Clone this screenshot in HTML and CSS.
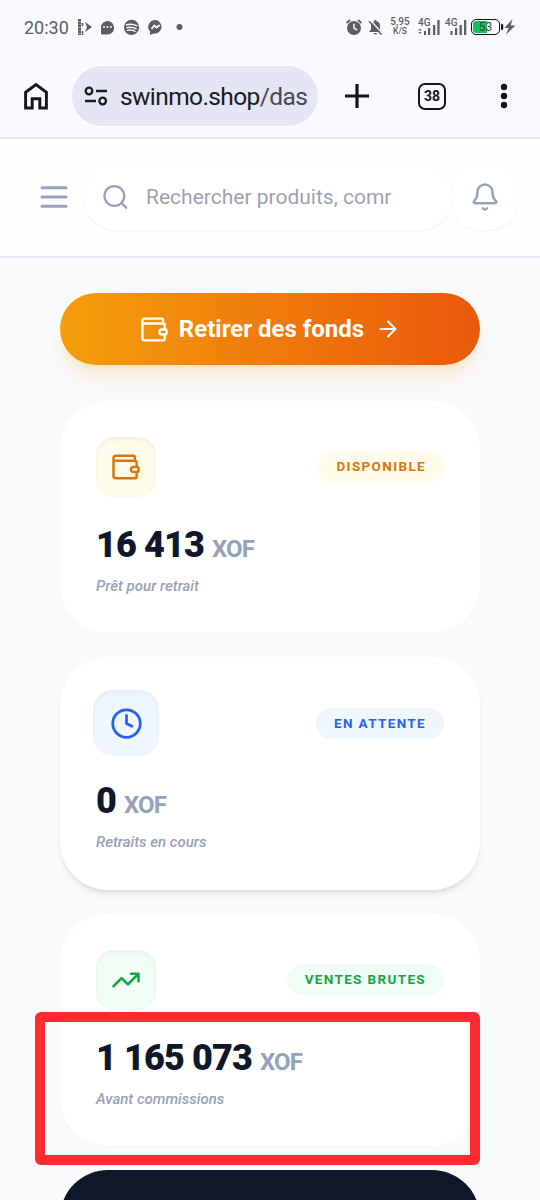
FILE: index.html
```html
<!DOCTYPE html>
<html lang="fr">
<head>
<meta charset="utf-8">
<title>Swinmo – Tableau de bord</title>
<link rel="stylesheet" href="styles.css">
</head>
<body>
<svg class="defs" width="0" height="0">
  <symbol id="wallet" viewBox="0 0 24 24"><path d="M19 7V4a1 1 0 0 0-1-1H4a2 2 0 0 0-2 2v14a2 2 0 0 0 2 2h15a1.500 1.500 0 0 0 1.500-1.500V16M2 7h17a1.500 1.500 0 0 1 1.500 1.500V12M18 12h3a1 1 0 0 1 1 1v2a1 1 0 0 1-1 1h-3a2 2 0 0 1 0-4z"/></symbol>
</svg>
<div class="screen">
  <div class="status">
    <span class="clock">20:30</span>
    <svg class="notifs" width="110" height="20" viewBox="0 0 110 20">
      <path d="M3.500 1v16" stroke="#5d5e64" stroke-width="3" stroke-dasharray="2.500 .4"/><path d="M6.500 5v3M6.500 13v4" stroke="#5d5e64" stroke-width="1.500"/><path d="M9 4l7 5-7 5 2-5z" fill="#5d5e64"/>
      <path d="M25 16.500V9a6.600 6.800 0 1 1 6.600 7.500z" fill="#5d5e64"/><g fill="#f9f9ff"><circle cx="28" cy="9" r="1"/><circle cx="31.500" cy="9" r="1"/><circle cx="35" cy="9" r="1"/></g>
      <circle cx="55.500" cy="9.300" r="7.600" fill="#5d5e64"/><path d="M50.500 6.800q5.500-1.500 10.500 1M51 9.700q4.700-1.200 9 1M51.500 12.400q4-1 7.500.9" fill="none" stroke="#f9f9ff" stroke-width="1.400" stroke-linecap="round"/>
      <path d="M79.500 2a7 6.800 0 1 1-2 13.600L74 17v-3.700A7 6.800 0 0 1 79.500 2z" fill="#5d5e64"/><path d="M75.500 11l2.800-3.500 2.400 2L83.700 7" fill="none" stroke="#f9f9ff" stroke-width="1.800"/>
      <circle cx="103.500" cy="9" r="3" fill="#5d5e64"/>
    </svg>
    <svg class="alarm" width="40" height="20" viewBox="0 0 40 20">
      <circle cx="9" cy="10" r="7" fill="#5d5e64"/><path d="M1.500 5L5 2M16.500 5L13 2" stroke="#5d5e64" stroke-width="1.800"/><path d="M9 5.800V10l3.200 2.200" fill="none" stroke="#f9f9ff" stroke-width="1.500"/>
      <path d="M24.500 14V13l1.500-1.500V8q0-4 3.500-4.800V2.500q1-1.300 2 0v.7Q35 4 35 8v3.500l1.500 1.500v1z" fill="#5d5e64"/><path d="M28.500 15h4q-2 3-4 0z" fill="#5d5e64"/><path d="M25 1.800L37.500 15.500" stroke="#f9f9ff" stroke-width="1.300"/><path d="M24 3.200L36.500 16.800" stroke="#5d5e64" stroke-width="1.500"/>
    </svg>
    <span class="rate"><b>5,95</b><i>K/S</i></span>
    <span class="signal"><span>4G</span>
      <svg width="22" height="16" viewBox="0 0 22 16" fill="#5d5e64"><path d="M.3 11.500L2 9.500l1.700 2zM.3 13L2 15l1.700-2z"/><rect x="6" y="12" width="2" height="4"/><rect x="10" y="9" width="2.200" height="7"/><rect x="15" y="6" width="2.300" height="10"/><rect x="19.300" y="1" width="2.300" height="15"/></svg></span>
    <span class="signal second"><span>4G</span>
      <svg width="22" height="16" viewBox="0 0 22 16" fill="#5d5e64"><rect x="5.500" y="12" width="2" height="4"/><rect x="10" y="9" width="2.200" height="7"/><rect x="14.500" y="6" width="2.300" height="10"/><rect x="19" y="1" width="2.300" height="15"/></svg></span>
    <span class="battery">53</span>
    <svg class="bolt" width="16" height="20" viewBox="0 0 16 20"><rect width="2.200" height="6" y="7" rx="1" fill="#111"/><path d="M11.500 2L3.500 11h4.200L5 17.500l9.500-9H9.700z" fill="#5d5e64"/></svg>
  </div>

  <div class="browser">
    <svg class="home" width="26" height="28" viewBox="0 0 26 28"><path d="M2.600 26V10.300L13 2.500l10.400 7.800V26h-6.600v-9.300H9.200V26z" fill="none" stroke="#15151e" stroke-width="2.900"/></svg>
    <div class="url">
      <svg width="24" height="20" viewBox="0 0 24 20" fill="none" stroke="#1b1b24" stroke-width="2.300"><circle cx="5" cy="5" r="3.300"/><path d="M12 5h11M1 15h11"/><circle cx="18.700" cy="15" r="3.300"/></svg>
      <span>swinmo.shop<em>/das</em></span>
    </div>
    <svg class="plus" width="24" height="24" viewBox="0 0 24 24"><path d="M12 0v24M0 12h24" stroke="#15151e" stroke-width="3.200"/></svg>
    <span class="tabs">38</span>
    <svg class="dots" width="8" height="26" viewBox="0 0 8 26" fill="#15151e"><circle cx="4" cy="4" r="3.200"/><circle cx="4" cy="13" r="3.200"/><circle cx="4" cy="22" r="3.200"/></svg>
  </div>

  <header class="topbar">
    <svg class="menu" width="36" height="36" viewBox="0 0 24 24"><path d="M4 5.800h16M4 12h16M4 18.200h16"/></svg>
    <div class="search">
      <svg width="27" height="27" viewBox="0 0 24 24"><circle cx="11" cy="11.500" r="8.800"/><path d="m21.500 22-4.300-4.300"/></svg>
      <span>Rechercher produits, comr</span>
    </div>
    <div class="bell"><svg width="30" height="30" viewBox="0 0 24 24"><path d="M6 8a6 6 0 0 1 12 0c0 4.499 1.411 5.956 2.738 7.326A1 1 0 0 1 20 17H4a1 1 0 0 1-.74-1.673C4.589 13.956 6 12.499 6 8M10.300 21a1.940 1.940 0 0 0 3.400 0"/></svg></div>
  </header>

  <main class="content">
    <div class="withdraw">
      <svg width="29" height="29"><use href="#wallet"/></svg>
      <span>Retirer des fonds</span>
      <svg class="arrow" width="24" height="24" viewBox="0 0 24 24"><path d="M4.500 12h15M12 4.500l7.500 7.500-7.500 7.500"/></svg>
    </div>

    <section class="card amber">
      <div class="head"><div class="icon"><svg width="30" height="30"><use href="#wallet"/></svg></div><span class="tag">DISPONIBLE</span></div>
      <div class="amount">16 413 <small>XOF</small></div>
      <p>Prêt pour retrait</p>
    </section>

    <section class="card blue">
      <div class="head"><div class="icon"><svg width="33" height="33" viewBox="0 0 24 24"><circle cx="12" cy="12" r="10"/><path d="M12 6v6l4 2"/></svg></div><span class="tag">EN ATTENTE</span></div>
      <div class="amount">0 <small>XOF</small></div>
      <p>Retraits en cours</p>
    </section>

    <section class="card green">
      <div class="head"><div class="icon"><svg width="30" height="30" viewBox="0 0 24 24"><path d="M16 7h6v6M22 7l-8.500 8.500-5-5L2 17"/></svg></div><span class="tag">VENTES BRUTES</span></div>
      <div class="amount">1 165 073 <small>XOF</small></div>
      <p>Avant commissions</p>
    </section>

    <section class="dark"></section>
  </main>
  <div class="highlight"></div>
</div>
</body>
</html>
```

FILE: styles.css
```css
* { box-sizing: border-box; }
body { margin: 0; font-family: Roboto, "Liberation Sans", sans-serif; background: #f8fafc; }
svg { display: block; flex: none; }
.defs { position: absolute; }
.screen { position: relative; width: 540px; height: 1200px; overflow: hidden; background: #f8fafc; }

.status { display: flex; align-items: center; height: 56px; padding-left: 24px; background: #f9f9ff; color: #5d5e64; }
.clock { width: 52px; font-size: 18px; line-height: 20px; }
.alarm { margin-left: 159px; }
.rate { display: flex; flex-direction: column; align-items: center; width: 20px; margin: -4px 0 0 5px; }
.rate b { font-size: 10px; line-height: 10px; font-weight: 500; }
.rate i { font-size: 8.500px; line-height: 8px; font-style: normal; font-weight: 500; }
.signal { position: relative; width: 22px; height: 16px; margin: -2px 0 0 8px; }
.signal.second { margin-left: 5px; }
.signal span { position: absolute; left: 0; top: -1px; font-size: 10px; line-height: 10px; font-weight: 500; }
.battery { width: 29px; height: 16px; margin: -2px 0 0 4px; border: 1.500px solid #111; border-radius: 5px; background: linear-gradient(90deg, #12c45c 54%, #fff 54%) content-box; padding: 1px; font-size: 12px; line-height: 13px; text-align: center; color: #444; }
.bolt { margin: -2px 0 0 1px; }

.browser { display: flex; align-items: center; height: 83px; padding: 0 0 1px 23px; background: #f9f9ff; border-bottom: 2px solid #e6e7ee; }
.url { display: flex; align-items: center; gap: 12px; width: 246px; height: 60px; margin-left: 23px; padding-left: 12px; border-radius: 30px; background: #e4e6f3; font-size: 24.500px; letter-spacing: -.6px; color: #1b1b24; white-space: nowrap; }
.url em { font-style: normal; color: #484955; }
.plus { margin-left: 27px; }
.tabs { width: 28px; height: 27px; margin-left: 49px; border: 2.500px solid #15151e; border-radius: 7px; font-size: 14px; line-height: 23px; font-weight: 700; text-align: center; color: #15151e; }
.dots { margin-left: 54px; }

.topbar { display: flex; align-items: center; height: 119px; padding: 0 23px 2px 36px; border-bottom: 2px solid #e5e9f1; background: #fefeff; }
.topbar svg { fill: none; stroke: #94a3b8; stroke-width: 2; stroke-linecap: round; stroke-linejoin: round; }
.search { display: flex; align-items: center; gap: 17px; width: 370px; height: 66px; margin-left: 11px; padding-left: 19px; border-radius: 33px; background: #fff; box-shadow: 0 1px 2px rgba(15, 23, 42, .06); font-size: 21px; color: #9ca3af; white-space: nowrap; }
.bell { display: grid; place-items: center; width: 65px; height: 66px; border-radius: 27px; background: #fff; box-shadow: 0 1px 2px rgba(15, 23, 42, .06); }

.content { padding: 35px 60px 0; }
.withdraw { display: flex; align-items: center; justify-content: center; height: 72px; margin-bottom: 36px; border-radius: 36px; background: linear-gradient(90deg, #f59e0b, #ea580c); box-shadow: 0 15px 23px -5px rgba(245, 158, 11, .2), 0 6px 9px -6px rgba(245, 158, 11, .2); color: #fff; font-size: 24px; font-weight: 700; }
.withdraw svg, .icon svg { fill: none; stroke: currentColor; stroke-width: 2; stroke-linecap: round; stroke-linejoin: round; }
.withdraw span { margin: 0 12px 0 10px; }
.card { height: 232.300px; margin-bottom: 24px; padding: 36px; border-radius: 48px; background: #fff; box-shadow: 0 1px 2px rgba(15, 23, 42, .02); }
.head { display: flex; align-items: center; justify-content: space-between; height: 60px; }
.icon { display: grid; place-items: center; width: 60px; height: 60px; border-radius: 18px; box-shadow: inset 0 2px 5px rgba(0, 0, 0, .05); }
.tag { height: 31.500px; padding: 0 18px; border-radius: 16px; font-size: 13.500px; line-height: 31.500px; font-weight: 700; letter-spacing: 1.350px; }
.amount { margin-top: 24px; font-size: 36px; line-height: 48px; font-weight: 900; letter-spacing: -.9px; color: #0f172a; white-space: nowrap; }
.amount small { font-size: 24px; font-weight: 700; color: #94a3b8; }
.card p { margin: 2px 0 0; font-size: 15px; line-height: 23px; font-style: italic; font-weight: 500; color: #94a3b8; }
.amber .icon, .amber .tag { background: #fffbeb; color: #d97706; }
.blue .icon, .blue .tag { background: #eff6ff; color: #2563eb; }
.green .icon, .green .tag { background: #f0fdf4; color: #16a34a; }
.blue { box-shadow: 0 6px 9px -2px rgba(0, 0, 0, .08), 0 3px 5px -2px rgba(0, 0, 0, .09); }
.blue .icon { width: 66px; height: 66px; margin: -3px; border-radius: 20px; }
.dark { height: 232px; border-radius: 48px; background: #0f172a; }

.highlight { position: absolute; left: 35px; top: 1012px; width: 445px; height: 153px; border: 10.500px solid #ff2b2f; border-radius: 6px; }
```
